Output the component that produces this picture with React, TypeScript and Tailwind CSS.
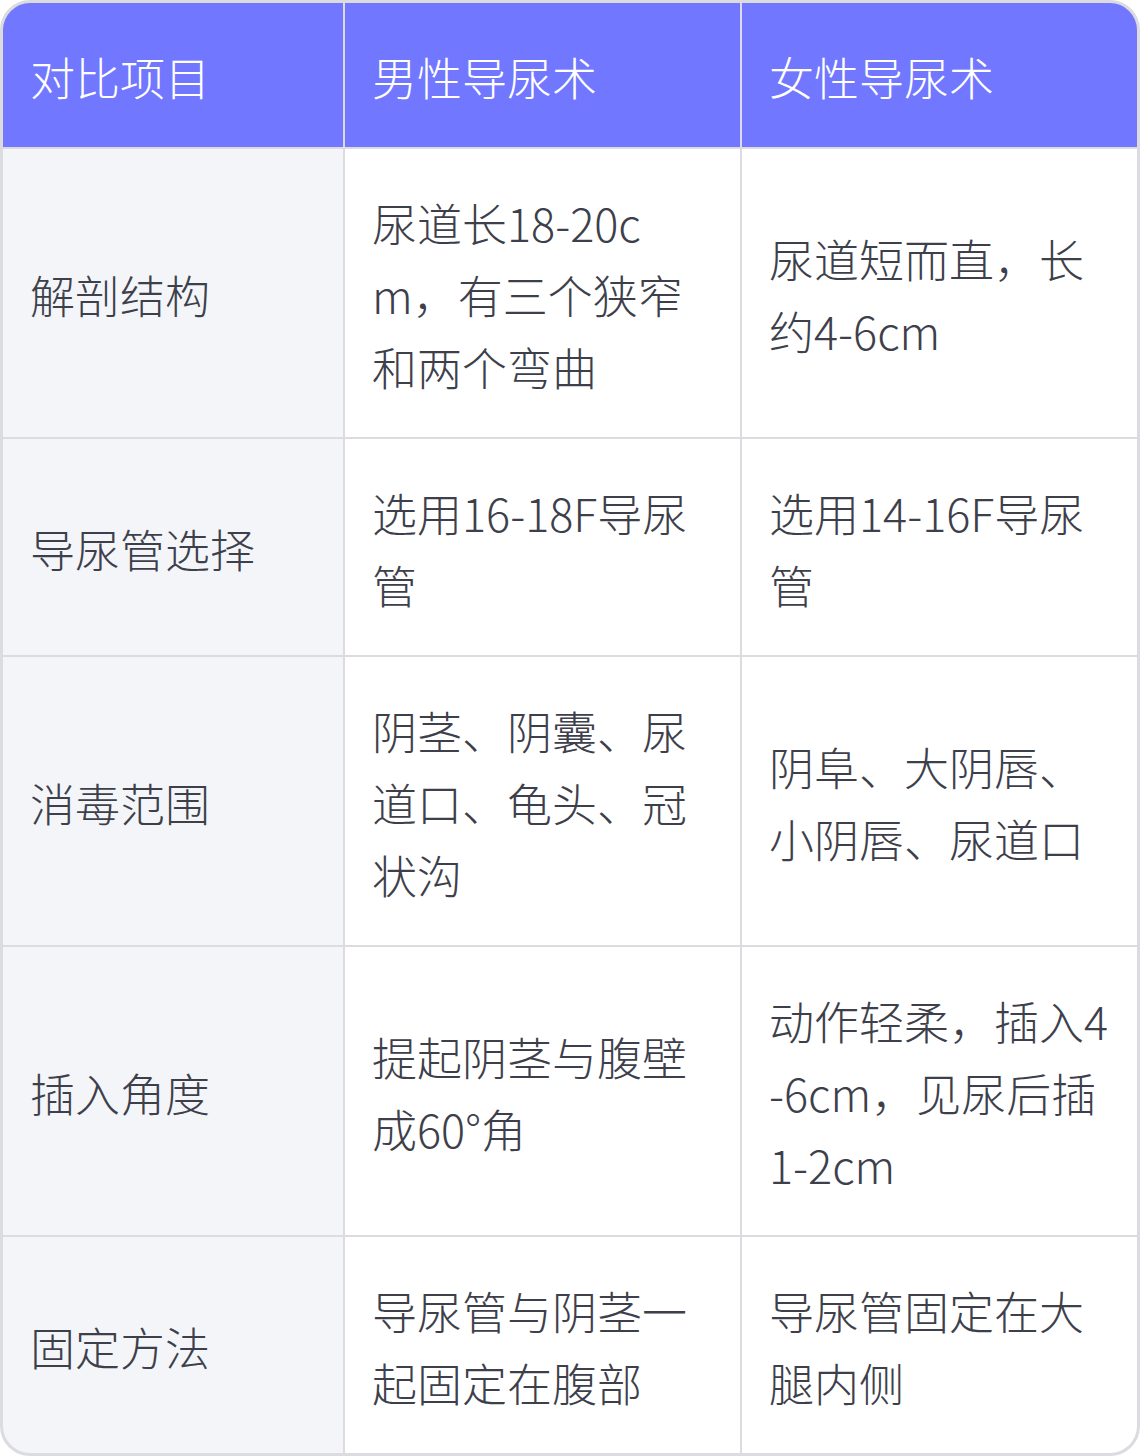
import React from "react";

const rows: [string, string, string][] = [
  ["解剖结构", "尿道长18-20cm，有三个狭窄和两个弯曲", "尿道短而直，长约4-6cm"],
  ["导尿管选择", "选用16-18F导尿管", "选用14-16F导尿管"],
  ["消毒范围", "阴茎、阴囊、尿道口、龟头、冠状沟", "阴阜、大阴唇、小阴唇、尿道口"],
  ["插入角度", "提起阴茎与腹壁成60°角", "动作轻柔，插入4-6cm，见尿后插1-2cm"],
  ["固定方法", "导尿管与阴茎一起固定在腹部", "导尿管固定在大腿内侧"],
];

const cell =
  "flex items-center pl-[27px] pr-[22px] pt-[38px] pb-[34px] text-[45px] leading-[72px] break-all";

export default function App() {
  return (
    <div
      className="w-[1140px] h-[1456px] bg-white font-extralight"
      style={{ fontFamily: '"Noto Sans CJK SC", "Noto Sans", sans-serif' }}
    >
      <div className="grid grid-cols-[340px_395px_395px] gap-[2px] border-[3px] border-[#dcdce0] bg-[#dcdce0] rounded-[30px] overflow-hidden">
        <div className={`${cell} bg-[#7177ff] text-white`}>对比项目</div>
        <div className={`${cell} bg-[#7177ff] text-white`}>男性导尿术</div>
        <div className={`${cell} bg-[#7177ff] text-white`}>女性导尿术</div>
        {rows.map(([a, b, c]) => (
          <React.Fragment key={a}>
            <div className={`${cell} bg-[#f4f5f9] text-[#3d404b]`}>{a}</div>
            <div className={`${cell} bg-white text-[#3d404b]`}>{b}</div>
            <div className={`${cell} bg-white text-[#3d404b]`}>{c}</div>
          </React.Fragment>
        ))}
      </div>
    </div>
  );
}
